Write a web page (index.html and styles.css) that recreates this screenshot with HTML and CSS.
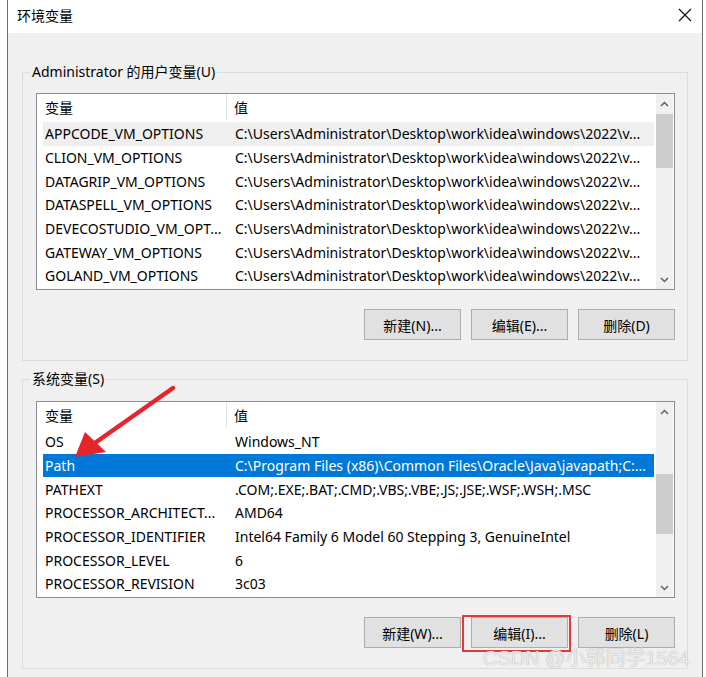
FILE: index.html
```html
<!DOCTYPE html>
<html lang="zh-CN">
    <head>
        <meta charset="UTF-8" />
        <meta name="viewport" content="width=device-width, initial-scale=1.0" />
        <title>环境变量</title>
        <link rel="stylesheet" href="styles.css">
    </head>
    <body>
        <div class="window">
            <div class="titlebar">
                <span class="title">环境变量</span>
                <svg class="close" width="14" height="14" viewBox="0 0 14 14">
                    <path d="M1 1 L13 13 M13 1 L1 13" stroke="#111" stroke-width="1.2" fill="none" />
                </svg>
            </div>

            <div class="content">
                <fieldset class="group">
                    <legend>Administrator 的用户变量(U)</legend>
                    <div class="list">
                        <div class="list-main">
                            <div class="list-head">
                                <div class="head-name">变量</div>
                                <div class="head-value">值</div>
                            </div>
                            <div class="row current">
                                <div class="name">APPCODE_VM_OPTIONS</div>
                                <div class="value">C:\Users\Administrator\Desktop\work\idea\windows\2022\v...</div>
                            </div>
                            <div class="row">
                                <div class="name">CLION_VM_OPTIONS</div>
                                <div class="value">C:\Users\Administrator\Desktop\work\idea\windows\2022\v...</div>
                            </div>
                            <div class="row">
                                <div class="name">DATAGRIP_VM_OPTIONS</div>
                                <div class="value">C:\Users\Administrator\Desktop\work\idea\windows\2022\v...</div>
                            </div>
                            <div class="row">
                                <div class="name">DATASPELL_VM_OPTIONS</div>
                                <div class="value">C:\Users\Administrator\Desktop\work\idea\windows\2022\v...</div>
                            </div>
                            <div class="row">
                                <div class="name">DEVECOSTUDIO_VM_OPT...</div>
                                <div class="value">C:\Users\Administrator\Desktop\work\idea\windows\2022\v...</div>
                            </div>
                            <div class="row">
                                <div class="name">GATEWAY_VM_OPTIONS</div>
                                <div class="value">C:\Users\Administrator\Desktop\work\idea\windows\2022\v...</div>
                            </div>
                            <div class="row">
                                <div class="name">GOLAND_VM_OPTIONS</div>
                                <div class="value">C:\Users\Administrator\Desktop\work\idea\windows\2022\v...</div>
                            </div>
                        </div>
                        <div class="scrollbar">
                            <div class="arrow">
                                <svg width="9" height="6" viewBox="0 0 9 6"><path d="M1 5 L4.5 1.5 L8 5" stroke="#606060" stroke-width="1.5" fill="none" /></svg>
                            </div>
                            <div class="track">
                                <div class="thumb user-thumb"></div>
                            </div>
                            <div class="arrow">
                                <svg width="9" height="6" viewBox="0 0 9 6"><path d="M1 1 L4.5 4.5 L8 1" stroke="#606060" stroke-width="1.5" fill="none" /></svg>
                            </div>
                        </div>
                    </div>
                    <div class="buttons">
                        <button>新建(N)...</button>
                        <button>编辑(E)...</button>
                        <button>删除(D)</button>
                    </div>
                </fieldset>

                <fieldset class="group">
                    <legend>系统变量(S)</legend>
                    <div class="list">
                        <div class="list-main">
                            <div class="list-head">
                                <div class="head-name">变量</div>
                                <div class="head-value">值</div>
                            </div>
                            <div class="row">
                                <div class="name">OS</div>
                                <div class="value">Windows_NT</div>
                            </div>
                            <div class="row selected">
                                <div class="name">Path</div>
                                <div class="value">C:\Program Files (x86)\Common Files\Oracle\Java\javapath;C:...</div>
                            </div>
                            <div class="row">
                                <div class="name">PATHEXT</div>
                                <div class="value">.COM;.EXE;.BAT;.CMD;.VBS;.VBE;.JS;.JSE;.WSF;.WSH;.MSC</div>
                            </div>
                            <div class="row">
                                <div class="name">PROCESSOR_ARCHITECT...</div>
                                <div class="value">AMD64</div>
                            </div>
                            <div class="row">
                                <div class="name">PROCESSOR_IDENTIFIER</div>
                                <div class="value">Intel64 Family 6 Model 60 Stepping 3, GenuineIntel</div>
                            </div>
                            <div class="row">
                                <div class="name">PROCESSOR_LEVEL</div>
                                <div class="value">6</div>
                            </div>
                            <div class="row">
                                <div class="name">PROCESSOR_REVISION</div>
                                <div class="value">3c03</div>
                            </div>
                        </div>
                        <div class="scrollbar">
                            <div class="arrow">
                                <svg width="9" height="6" viewBox="0 0 9 6"><path d="M1 5 L4.5 1.5 L8 5" stroke="#606060" stroke-width="1.5" fill="none" /></svg>
                            </div>
                            <div class="track">
                                <div class="thumb system-thumb"></div>
                            </div>
                            <div class="arrow">
                                <svg width="9" height="6" viewBox="0 0 9 6"><path d="M1 1 L4.5 4.5 L8 1" stroke="#606060" stroke-width="1.5" fill="none" /></svg>
                            </div>
                        </div>
                    </div>
                    <div class="buttons">
                        <button>新建(W)...</button>
                        <button>编辑(I)...</button>
                        <button>删除(L)</button>
                    </div>
                </fieldset>
            </div>
        </div>

        <!-- annotations drawn over the screenshot -->
        <svg class="pointer" width="706" height="677" viewBox="0 0 706 677">
            <line x1="173" y1="388" x2="92" y2="445" stroke="#e8242b" stroke-width="4.5" stroke-linecap="round" />
            <polygon points="75,457 85,432 106,452" fill="#e8242b" />
        </svg>
        <div class="highlight"></div>
        <div class="watermark">CSDN @小郭同学1564</div>
    </body>
</html>
```

FILE: styles.css
```css
body {
    margin: 0;
    background: #fff;
    font-family: "Noto Sans", "Noto Sans CJK SC", sans-serif;
    font-size: 14px;
    color: #000;
    position: relative;
    height: 677px;
    overflow: hidden;
}

.window {
    margin-left: 7px;
    width: 696px;
    height: 677px;
    box-sizing: border-box;
    border-left: 1px solid #6d6d6d;
    border-right: 1px solid #6d6d6d;
    display: flex;
    flex-direction: column;
}

.titlebar {
    height: 33px;
    box-sizing: border-box;
    background: #fff;
    display: flex;
    align-items: center;
    justify-content: space-between;
    padding: 0 10px 3px 9px;
}

.content {
    flex: 1;
    background: #f0f0f0;
    padding: 29px 14px 0;
}

.group {
    margin: 0;
    border: 1px solid #dcdcdc;
    padding: 0 12px 20px 13px;
}

.group + .group {
    margin-top: 8px;
}

.group legend {
    padding: 0 2px;
    margin-left: -6px;
    line-height: 20px;
}

.list {
    margin-top: 11px;
    height: 197px;
    box-sizing: border-box;
    border: 1px solid #8a8d94;
    background: #fff;
    display: flex;
}

.group + .group .list {
    margin-top: 12px;
}

.list-main {
    flex: 1;
    min-width: 0;
}

.list-head {
    display: flex;
    height: 28px;
    box-sizing: border-box;
    padding-bottom: 2px;
}

.head-name {
    width: 190px;
    box-sizing: border-box;
    padding-left: 8px;
    border-right: 1px solid #e5e5e5;
    display: flex;
    align-items: center;
}

.head-value {
    padding-left: 7px;
    display: flex;
    align-items: center;
}

.row {
    display: flex;
    align-items: center;
    height: 23.67px;
    margin: 0 2px 0 6px;
    white-space: nowrap;
}

.row .name {
    width: 190px;
    box-sizing: border-box;
    padding-left: 2px;
}

.row .value {
    padding-left: 2px;
}

.row.current {
    background: #efefef;
}

.row.selected {
    background: #0078d7;
    color: #fff;
}

.scrollbar {
    width: 17px;
    margin-right: 1px;
    background: #f0f0f0;
    display: flex;
    flex-direction: column;
}

.arrow {
    height: 19px;
    display: flex;
    align-items: center;
    justify-content: center;
}

.track {
    flex: 1;
}

.thumb {
    background: #cdcdcd;
}

.user-thumb {
    height: 54px;
    margin-top: 1px;
}

.system-thumb {
    height: 60px;
    margin-top: 53px;
}

.buttons {
    display: flex;
    justify-content: flex-end;
    gap: 10px;
    margin-top: 19px;
}

.buttons button {
    width: 97px;
    height: 31px;
    padding: 0;
    background: #e1e1e1;
    border: 1px solid #adadad;
    font: inherit;
    color: #000;
}

.pointer {
    position: absolute;
    left: 0;
    top: 0;
    pointer-events: none;
}

.highlight {
    position: absolute;
    left: 462px;
    top: 615px;
    width: 109px;
    height: 37px;
    box-sizing: border-box;
    border: 2px solid #e2393a;
}

.watermark {
    position: absolute;
    right: 16px;
    top: 645px;
    font-family: "Liberation Sans", "Noto Sans CJK SC", sans-serif;
    font-size: 20px;
    line-height: 26px;
    color: #ececec;
    text-shadow: 0 0 1px #9a9a9a;
}
```
